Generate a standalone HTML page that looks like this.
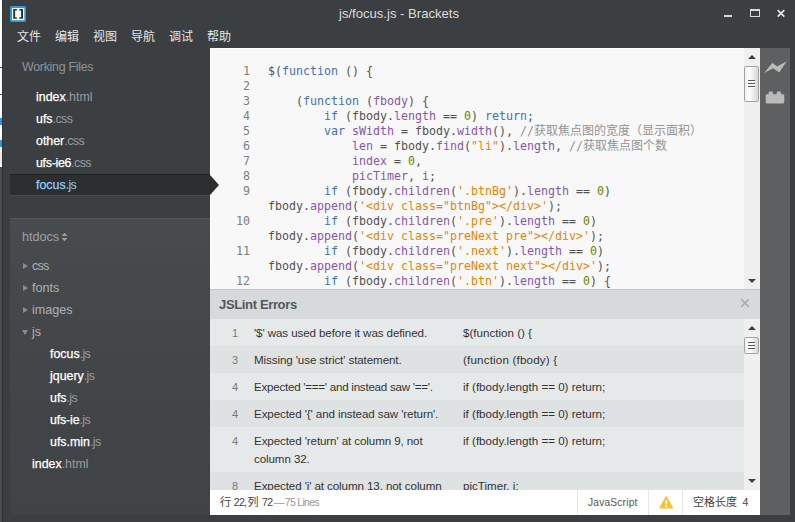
<!DOCTYPE html>
<html lang="zh-CN">
<head>
<meta charset="utf-8">
<title>js/focus.js - Brackets</title>
<style>
html,body{margin:0;padding:0;}
body{width:795px;height:522px;overflow:hidden;background:#3c3f41;position:relative;
  font-family:"Liberation Sans","Noto Sans CJK SC",sans-serif;}
.abs{position:absolute;}
#edge{left:0;top:0;width:2px;height:522px;background:#4a4d4e;}
#edge i{position:absolute;left:0;width:2px;display:block;}
#edgeline{left:2px;top:0;width:1px;height:522px;background:#323537;}
/* title bar */
#title{left:0;top:0;width:795px;height:26px;text-align:center;color:#dcdcdc;font-size:13.1px;line-height:27px;padding-left:3px;box-sizing:border-box;}
#logo{left:10px;top:6px;width:16px;height:16px;}
/* menu */
.menu{top:27px;height:20px;line-height:20px;font-size:12px;color:#e6e6e6;white-space:nowrap;}
/* sidebar */
#sidebar{left:3px;top:48px;width:207px;height:467px;}
.wf-h{left:22px;top:58px;font-size:12.4px;letter-spacing:-0.28px;line-height:18px;color:#8d9499;white-space:nowrap;}
.wf{left:36px;font-size:12.4px;line-height:18px;color:#fff;white-space:nowrap;}
.wf span,.tf span{color:#969da1;-webkit-text-stroke:0;}
.xc{letter-spacing:-0.55px;}.xj{letter-spacing:-0.6px;}
.wf,.tf{-webkit-text-stroke:0.25px;}
#sel{left:10px;top:174px;width:200px;height:21px;background:#2d2e30;box-shadow:0 1px 0 rgba(255,255,255,0.06), inset 0 1px 0 rgba(0,0,0,0.25);}
#selarrow{z-index:5;left:210px;top:174.500px;width:0;height:0;border-top:10.5px solid transparent;border-bottom:10.5px solid transparent;border-left:9px solid #2d2e30;}
#proj{left:10px;top:218px;width:200px;height:297px;background:linear-gradient(#494c4e 0,#46494b 50px,#434648 140px,#404345 297px);border-top:1px solid #54575a;box-sizing:border-box;}
.ph{left:22px;top:228px;font-size:12.6px;line-height:18px;color:#9aa1a4;white-space:nowrap;}
.dir{left:32px;font-size:12.6px;line-height:18px;color:#aab1b4;white-space:nowrap;}
.tf{font-size:12.4px;line-height:18px;color:#fff;white-space:nowrap;}
.tri-r{width:0;height:0;border-top:3.500px solid transparent;border-bottom:3.500px solid transparent;border-left:5.500px solid #878c8f;}
.tri-d{width:0;height:0;border-left:3.500px solid transparent;border-right:3.500px solid transparent;border-top:5.500px solid #878c8f;}
/* editor */
#editor{left:210px;top:48px;width:534px;height:241px;background:#f8f8f8;overflow:hidden;box-shadow:inset 1px 1px 0 #fff;}
.ln{margin-top:0px;left:0;width:40px;text-align:right;color:#7f7f7f;font-family:"DejaVu Sans Mono","Liberation Mono",monospace;font-size:11.63px;line-height:15px;height:15px;}
.cl{margin-top:0px;left:58px;white-space:pre;color:#535353;font-family:"DejaVu Sans Mono","Noto Sans CJK SC",monospace;font-size:11.63px;line-height:15px;height:15px;}
.z{font-size:12px;line-height:0;}
.k{color:#446fbd;}.d{color:#8757ad;}.p{color:#8757ad;}.n{color:#6d8600;}.s{color:#e88501;}.c{color:#949494;}
/* scrollbars */
.sb{background:#f0f0f0;width:16px;}
.thumb{background:linear-gradient(90deg,#ececec 0,#ffffff 30%,#f2f2f2 55%,#d6d6d6 100%);border:1px solid #a3a3a3;border-radius:1.500px;box-sizing:border-box;}
.grip{left:3px;width:7px;height:1px;background:#5a5a5a;box-shadow:0 1px 0 #fdfdfd;}
.arr-u{width:0;height:0;border-left:4px solid transparent;border-right:4px solid transparent;border-bottom:4px solid #404040;}
.arr-d{width:0;height:0;border-left:4px solid transparent;border-right:4px solid transparent;border-top:4px solid #404040;}
/* toolbar */
#toolbar{left:760px;top:48px;width:30px;height:467px;background:#5d5f61;}
/* bottom panel */
#panel{left:210px;top:289px;width:550px;height:201px;background:#dfe2e2;overflow:hidden;}
#ph{left:0;top:0;width:550px;height:30px;background:#d7dada;border-top:1px solid #c3c6c5;box-sizing:border-box;box-shadow:0 1px 0 #cfd2d2;}
#ph b{position:absolute;left:9px;top:6px;font-size:13px;letter-spacing:-0.35px;line-height:17px;color:#53585a;font-weight:bold;white-space:nowrap;}
.row{left:0;width:534px;}
.r1{background:#e6e9e9;}.r2{background:#dfe2e2;}
.rn{left:0;width:28px;text-align:right;font-size:11px;line-height:18px;color:#7a7a7a;}
.rm{left:44px;letter-spacing:-0.1px;font-size:11.6px;line-height:18px;color:#333;white-space:nowrap;}
.rc{left:253px;font-size:11.6px;line-height:18px;color:#333;white-space:nowrap;}
/* status */
#status{left:210px;top:490px;width:550px;height:25px;background:#fff;}
#status .t{font-size:11px;line-height:25px;color:#444;white-space:nowrap;}
#status .sn{font-size:10.5px;letter-spacing:-0.7px;}
</style>
</head>
<body>
<!-- window left edge -->
<div id="edge" class="abs">
  <i style="top:0;height:167px;background:#fdfdfd"></i>
  <i style="top:67px;height:1px;background:#555"></i>
  <i style="top:94px;height:1px;background:#555"></i>
  <i style="top:118px;height:7px;background:#3a8ee6"></i>
  <i style="top:140px;height:7px;background:#3a8ee6"></i>
  <i style="top:152px;height:12px;background:#f6e6dc"></i>
</div>
<div id="edgeline" class="abs"></div>

<!-- title bar -->
<div id="title" class="abs">js/focus.js - Brackets</div>
<svg id="logo" class="abs" viewBox="0 0 16 16">
  <rect x="0" y="0" width="16" height="16" rx="1.500" fill="#2e97d6"/>
  <rect x="2" y="2" width="12.300" height="12.200" fill="#f2f9fd"/>
  <path d="M6.900 3H3.200v9.800h3.700v-1.500H5.100V4.500h1.800zM9.300 3h3.700v9.800H9.300v-1.500h1.800V4.500H9.300z" fill="#2a3034"/>
</svg>
<!-- window controls -->
<svg class="abs" style="left:715px;top:0;width:80px;height:26px" viewBox="0 0 80 26">
  <rect x="9" y="15" width="8" height="2" fill="#d8d8d8"/>
  <rect x="35.500" y="9.500" width="9" height="7" fill="none" stroke="#d8d8d8" stroke-width="1"/>
  <rect x="35" y="9" width="10" height="2" fill="#d8d8d8"/>
  <path d="M62.700 10.200l6.600 6.400M69.300 10.200l-6.600 6.400" stroke="#e6e6e6" stroke-width="1.700" fill="none"/>
</svg>

<!-- menu -->
<div class="abs menu" style="left:17px">文件</div>
<div class="abs menu" style="left:55px">编辑</div>
<div class="abs menu" style="left:93px">视图</div>
<div class="abs menu" style="left:131px">导航</div>
<div class="abs menu" style="left:169px">调试</div>
<div class="abs menu" style="left:207px">帮助</div>

<!-- sidebar -->
<div class="abs wf-h">Working Files</div>
<div class="abs wf" style="top:88px">index<span>.html</span></div>
<div class="abs wf" style="top:110px">ufs<span class="xc">.css</span></div>
<div class="abs wf" style="top:132px">other<span class="xc">.css</span></div>
<div class="abs wf" style="top:154px"><span style="color:#fff;letter-spacing:-0.3px;-webkit-text-stroke:0.25px">ufs-ie6</span><span class="xc">.css</span></div>
<div id="sel" class="abs"></div>
<div id="selarrow" class="abs"></div>
<div class="abs wf" style="top:176px;color:#8fd0f5">focus<span class="xj" style="color:#8fd0f5">.js</span></div>

<div id="proj" class="abs"></div>
<div class="abs ph">htdocs</div>
<svg class="abs" style="left:61px;top:232px;width:7px;height:10px" viewBox="0 0 7 10"><path d="M0.500 4L3.500 0.800L6.500 4zM0.500 6L3.500 9.200L6.500 6z" fill="#9aa1a4"/></svg>
<div class="abs tri-r" style="left:23px;top:263px"></div>
<div class="abs dir" style="top:257px;letter-spacing:-0.8px">css</div>
<div class="abs tri-r" style="left:23px;top:285px"></div>
<div class="abs dir" style="top:279px">fonts</div>
<div class="abs tri-r" style="left:23px;top:307px"></div>
<div class="abs dir" style="top:301px">images</div>
<div class="abs tri-d" style="left:22px;top:330px"></div>
<div class="abs dir" style="top:323px">js</div>
<div class="abs tf" style="left:50px;top:345px">focus<span class="xj">.js</span></div>
<div class="abs tf" style="left:50px;top:367px">jquery<span class="xj">.js</span></div>
<div class="abs tf" style="left:50px;top:389px">ufs<span class="xj">.js</span></div>
<div class="abs tf" style="left:50px;top:411px"><span style="color:#fff;letter-spacing:-0.15px;-webkit-text-stroke:0.25px">ufs-ie</span><span class="xj">.js</span></div>
<div class="abs tf" style="left:50px;top:433px">ufs.min<span class="xj">.js</span></div>
<div class="abs tf" style="left:32px;top:455px">index<span>.html</span></div>

<!-- editor -->
<div id="editor" class="abs">
  <div class="abs ln" style="top:16px">1</div>
  <div class="abs ln" style="top:31px">2</div>
  <div class="abs ln" style="top:46px">3</div>
  <div class="abs ln" style="top:61px">4</div>
  <div class="abs ln" style="top:76px">5</div>
  <div class="abs ln" style="top:91px">6</div>
  <div class="abs ln" style="top:106px">7</div>
  <div class="abs ln" style="top:121px">8</div>
  <div class="abs ln" style="top:136px">9</div>
  <div class="abs ln" style="top:166px">10</div>
  <div class="abs ln" style="top:196px">11</div>
  <div class="abs ln" style="top:226px">12</div>

  <div class="abs cl" style="top:16px">$(<span class="k">function</span> () {</div>
  <div class="abs cl" style="top:46px">    (<span class="k">function</span> (<span class="d">fbody</span>) {</div>
  <div class="abs cl" style="top:61px">        <span class="k">if</span> (fbody.<span class="p">length</span> == <span class="n">0</span>) <span class="k">return</span>;</div>
  <div class="abs cl" style="top:76px">        <span class="k">var</span> <span class="d">sWidth</span> = fbody.<span class="p">width</span>(), <span class="c">//<span class="z">获取焦点图的宽度（显示面积）</span></span></div>
  <div class="abs cl" style="top:91px">            <span class="d">len</span> = fbody.<span class="p">find</span>(<span class="s">"li"</span>).<span class="p">length</span>, <span class="c">//<span class="z">获取焦点图个数</span></span></div>
  <div class="abs cl" style="top:106px">            <span class="d">index</span> = <span class="n">0</span>,</div>
  <div class="abs cl" style="top:121px">            <span class="d">picTimer</span>, <span class="d">i</span>;</div>
  <div class="abs cl" style="top:136px">        <span class="k">if</span> (fbody.<span class="p">children</span>(<span class="s">'.btnBg'</span>).<span class="p">length</span> == <span class="n">0</span>)</div>
  <div class="abs cl" style="top:151px">fbody.<span class="p">append</span>(<span class="s">'&lt;div class="btnBg"&gt;&lt;/div&gt;'</span>);</div>
  <div class="abs cl" style="top:166px">        <span class="k">if</span> (fbody.<span class="p">children</span>(<span class="s">'.pre'</span>).<span class="p">length</span> == <span class="n">0</span>)</div>
  <div class="abs cl" style="top:181px">fbody.<span class="p">append</span>(<span class="s">'&lt;div class="preNext pre"&gt;&lt;/div&gt;'</span>);</div>
  <div class="abs cl" style="top:196px">        <span class="k">if</span> (fbody.<span class="p">children</span>(<span class="s">'.next'</span>).<span class="p">length</span> == <span class="n">0</span>)</div>
  <div class="abs cl" style="top:211px">fbody.<span class="p">append</span>(<span class="s">'&lt;div class="preNext next"&gt;&lt;/div&gt;'</span>);</div>
  <div class="abs cl" style="top:226px">        <span class="k">if</span> (fbody.<span class="p">children</span>(<span class="s">'.btn'</span>).<span class="p">length</span> == <span class="n">0</span>) {</div>
</div>
<!-- editor scrollbar -->
<div class="abs sb" style="left:744px;top:48px;height:241px">
  <div class="abs arr-u" style="left:4px;top:7px"></div>
  <div class="abs thumb" style="left:0;top:18px;width:15px;height:36px">
    <div class="abs grip" style="top:13px"></div>
    <div class="abs grip" style="top:16px"></div>
    <div class="abs grip" style="top:19px"></div>
  </div>
  <div class="abs arr-d" style="left:4px;top:231px"></div>
</div>

<!-- right toolbar -->
<div id="toolbar" class="abs">
  <svg class="abs" style="left:0;top:0;width:30px;height:70px" viewBox="0 0 30 70">
    <path d="M4.200 25L12.400 14.800L17.200 18.600L26.700 13.200L19.200 24.400L13.100 20.200z" fill="#bababa"/>
    <rect x="5.700" y="46.300" width="18.600" height="9.100" rx="1.300" fill="#bababa"/>
    <circle cx="10.800" cy="45.600" r="2.300" fill="#bababa"/>
    <circle cx="18.900" cy="45.600" r="2.300" fill="#bababa"/>
  </svg>
</div>

<!-- bottom panel -->
<div id="panel" class="abs">
  <div id="ph" class="abs"><b>JSLint Errors</b></div>
  <svg class="abs" style="left:530px;top:9px;width:10px;height:10px" viewBox="0 0 10 10"><path d="M1.300 1.300l7.400 7.400M8.700 1.300l-7.400 7.400" stroke="#a4a8a8" stroke-width="1.500" fill="none"/></svg>

  <div class="abs row r1" style="top:30px;height:27px"></div>
  <div class="abs row r2" style="top:57px;height:27px"></div>
  <div class="abs row r1" style="top:84px;height:27px"></div>
  <div class="abs row r2" style="top:111px;height:27px"></div>
  <div class="abs row r1" style="top:138px;height:45px"></div>
  <div class="abs row r2" style="top:183px;height:27px"></div>

  <div class="abs rn" style="top:35px">1</div>
  <div class="abs rm" style="top:35px">'$' was used before it was defined.</div>
  <div class="abs rc" style="top:35px">$(function () {</div>

  <div class="abs rn" style="top:62px">3</div>
  <div class="abs rm" style="top:62px">Missing 'use strict' statement.</div>
  <div class="abs rc" style="top:62px;letter-spacing:0.18px">(function (fbody) {</div>

  <div class="abs rn" style="top:89px">4</div>
  <div class="abs rm" style="top:89px;letter-spacing:-0.25px">Expected '===' and instead saw '=='.</div>
  <div class="abs rc" style="top:89px">if (fbody.length == 0) return;</div>

  <div class="abs rn" style="top:116px">4</div>
  <div class="abs rm" style="top:116px">Expected '{' and instead saw 'return'.</div>
  <div class="abs rc" style="top:116px">if (fbody.length == 0) return;</div>

  <div class="abs rn" style="top:143px">4</div>
  <div class="abs rm" style="top:143px">Expected 'return' at column 9, not<br>column 32.</div>
  <div class="abs rc" style="top:143px">if (fbody.length == 0) return;</div>

  <div class="abs rn" style="top:188px">8</div>
  <div class="abs rm" style="top:188px">Expected 'i' at column 13, not column</div>
  <div class="abs rc" style="top:188px">picTimer, i;</div>

  <!-- panel scrollbar -->
  <div class="abs sb" style="left:534px;top:30px;height:171px">
    <div class="abs arr-u" style="left:4px;top:7px"></div>
    <div class="abs thumb" style="left:0;top:18px;width:14.500px;height:17px">
      <div class="abs grip" style="top:4px"></div>
      <div class="abs grip" style="top:7px"></div>
      <div class="abs grip" style="top:10px"></div>
    </div>
    <div class="abs arr-d" style="left:4px;top:160px"></div>
  </div>
</div>

<!-- status bar -->
<div id="status" class="abs">
  <div class="abs t" style="left:10px;top:0;font-size:11px">行</div>
  <div class="abs t sn" style="left:23.800px;top:0">22,</div>
  <div class="abs t" style="left:37.500px;top:0;font-size:11px">列</div>
  <div class="abs t sn" style="left:52px;top:0">72</div>
  <div class="abs t sn" style="left:64px;top:0;color:#999">—</div>
  <div class="abs t sn" style="left:74.800px;top:0;color:#999">75 Lines</div>
  <div class="abs" style="left:367px;top:0;width:1px;height:25px;background:#e6e6e6"></div>
  <div class="abs t" style="left:378px;top:0;color:#555;font-size:10.2px;letter-spacing:0.2px">JavaScript</div>
  <div class="abs" style="left:438px;top:0;width:1px;height:25px;background:#e6e6e6"></div>
  <svg class="abs" style="left:448.500px;top:5.500px;width:14.600px;height:13px" viewBox="0 0 16 15">
    <path d="M8 1.300L14.800 13.500H1.200z" fill="#fdc12c" stroke="#fdc12c" stroke-width="2" stroke-linejoin="round"/>
    <rect x="7.100" y="4.600" width="1.900" height="5" fill="#fff"/>
    <rect x="7.100" y="10.800" width="1.900" height="1.900" fill="#fff"/>
  </svg>
  <div class="abs" style="left:472px;top:0;width:1px;height:25px;background:#e6e6e6"></div>
  <div class="abs t" style="left:483px;top:0;font-size:11px">空格长度</div>
  <div class="abs t sn" style="left:532.500px;top:0;letter-spacing:0">4</div>
</div>
</body>
</html>
